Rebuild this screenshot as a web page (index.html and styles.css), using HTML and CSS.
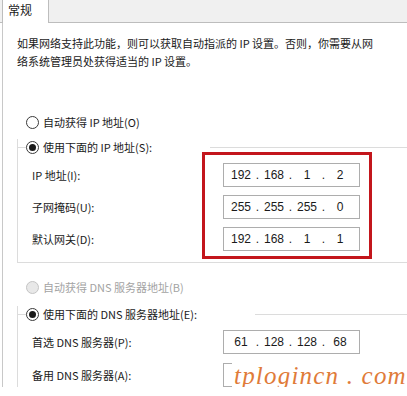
FILE: index.html
```html
<!DOCTYPE html>
<html lang="zh-CN">
<head>
<meta charset="utf-8">
<title>IP 设置</title>
<link rel="stylesheet" href="styles.css">
</head>
<body>
<div class="tabbar"><div class="tab">常规</div></div>
<div class="panel">
  <p class="desc">如果网络支持此功能，则可以获取自动指派的 IP 设置。否则，你需要从网<br>络系统管理员处获得适当的 IP 设置。</p>

  <div class="radio-row r-auto-ip"><span class="radio"></span><span>自动获得 IP 地址(O)</span></div>

  <div class="group g-ip">
    <div class="group-head"><span class="seg"></span><span class="radio checked"></span><span class="legend">使用下面的 IP 地址(S):</span><span class="line"></span></div>
    <div class="rows">
      <span class="label">IP 地址(I):</span>
      <div class="ipbox"><span class="oct">192</span><span class="dot">.</span><span class="oct">168</span><span class="dot">.</span><span class="oct">1</span><span class="dot">.</span><span class="oct">2</span></div>
      <span class="label">子网掩码(U):</span>
      <div class="ipbox"><span class="oct">255</span><span class="dot">.</span><span class="oct">255</span><span class="dot">.</span><span class="oct">255</span><span class="dot">.</span><span class="oct">0</span></div>
      <span class="label">默认网关(D):</span>
      <div class="ipbox"><span class="oct">192</span><span class="dot">.</span><span class="oct">168</span><span class="dot">.</span><span class="oct">1</span><span class="dot">.</span><span class="oct">1</span></div>
    </div>
    <div class="highlight"></div>
  </div>

  <div class="radio-row r-auto-dns disabled"><span class="radio"></span><span>自动获得 DNS 服务器地址(B)</span></div>

  <div class="group g-dns">
    <div class="group-head"><span class="seg"></span><span class="radio checked"></span><span class="legend">使用下面的 DNS 服务器地址(E):</span><span class="line"></span></div>
    <div class="rows">
      <span class="label">首选 DNS 服务器(P):</span>
      <div class="ipbox"><span class="oct">61</span><span class="dot">.</span><span class="oct">128</span><span class="dot">.</span><span class="oct">128</span><span class="dot">.</span><span class="oct">68</span></div>
      <span class="label">备用 DNS 服务器(A):</span>
      <div class="ipbox"></div>
    </div>
    <div class="watermark">tplogincn . com</div>
  </div>
</div>
</body>
</html>
```
FILE: styles.css
```css
html, body {
  margin: 0;
  padding: 0;
  overflow: hidden;
  background: #ffffff;
}
body {
  font-family: "Noto Sans CJK SC", "Noto Sans", sans-serif;
  font-size: 11px;
  color: #1a1a1a;
}
.tabbar {
  height: 22px;
  background: #f0f0f0;
  border-bottom: 1px solid #bdbdbd;
  display: flex;
  align-items: flex-end;
  padding-left: 2px;
}
.tab {
  width: 47px;
  height: 23px;
  margin-bottom: -1px;
  background: #ffffff;
  border-left: 1px solid #bdbdbd;
  border-right: 1px solid #bdbdbd;
  font-size: 12px;
  line-height: 20px;
  padding-left: 5px;
  box-sizing: border-box;
}
.panel {
  margin-left: 2px;
  border-left: 1px solid #c8c8c8;
  padding-left: 14px;
}
.desc {
  margin: 0;
  padding-top: 11px;
  line-height: 18px;
  white-space: nowrap;
}
.radio-row {
  display: flex;
  align-items: center;
  height: 16px;
  line-height: 16px;
  padding-left: 9px;
  gap: 4px;
}
.r-auto-ip { margin-top: 44px; }
.r-auto-dns { margin-top: 16px; }
.disabled { color: #a3a3a3; }
.radio {
  flex: none;
  width: 13px;
  height: 13px;
  box-sizing: border-box;
  border: 1px solid #3a3a3a;
  border-radius: 50%;
  background: #ffffff;
  display: inline-flex;
  align-items: center;
  justify-content: center;
}
.radio.checked::after {
  content: "";
  width: 7px;
  height: 7px;
  border-radius: 50%;
  background: #1a1a1a;
}
.disabled .radio {
  border-color: #c4c4c4;
  background: #e8e8e8;
}
.group {
  position: relative;
  border-left: 1px solid #dcdcdc;
  border-bottom: 1px solid #dcdcdc;
  padding-bottom: 11px;
}
.g-ip { margin-top: 9px; }
.g-dns {
  margin-top: 11px;
  border-bottom: none;
  padding-bottom: 0;
}
.group-head {
  display: flex;
  align-items: center;
  height: 16px;
  line-height: 16px;
}
.seg {
  flex: 0 0 8px;
  height: 1px;
  background: #dcdcdc;
}
.legend { margin-left: 4px; white-space: nowrap; }
.line {
  flex: 1;
  height: 1px;
  background: #dcdcdc;
  margin-left: 58px;
}
.rows {
  display: grid;
  grid-template-columns: 191px 137px;
  grid-auto-rows: 24px;
  row-gap: 8px;
  align-items: center;
  padding-top: 8px;
  padding-left: 14px;
}
.g-dns .rows { row-gap: 9px; }
.label { white-space: nowrap; line-height: 16px; }
.ipbox {
  height: 24px;
  box-sizing: border-box;
  border: 1px solid #adadad;
  background: #ffffff;
  display: flex;
  align-items: center;
  padding-left: 4px;
  font-family: "Liberation Sans", Arial, sans-serif;
  font-size: 12px;
  color: #1a1a1a;
}
.oct { width: 26px; text-align: center; }
.dot { width: 7px; text-align: center; }
.highlight {
  position: absolute;
  left: 184px;
  top: 13px;
  width: 170px;
  height: 107px;
  box-sizing: border-box;
  border: 3px solid #c3161c;
}
.watermark {
  position: absolute;
  left: 214px;
  top: 54px;
  width: 175px;
  height: 36px;
  background: #ffffff;
  font-family: "Liberation Serif", "DejaVu Serif", serif;
  font-style: italic;
  font-size: 25px;
  line-height: 32px;
  letter-spacing: 1.2px;
  color: #e07b39;
  padding-left: 2px;
  white-space: nowrap;
}
```
